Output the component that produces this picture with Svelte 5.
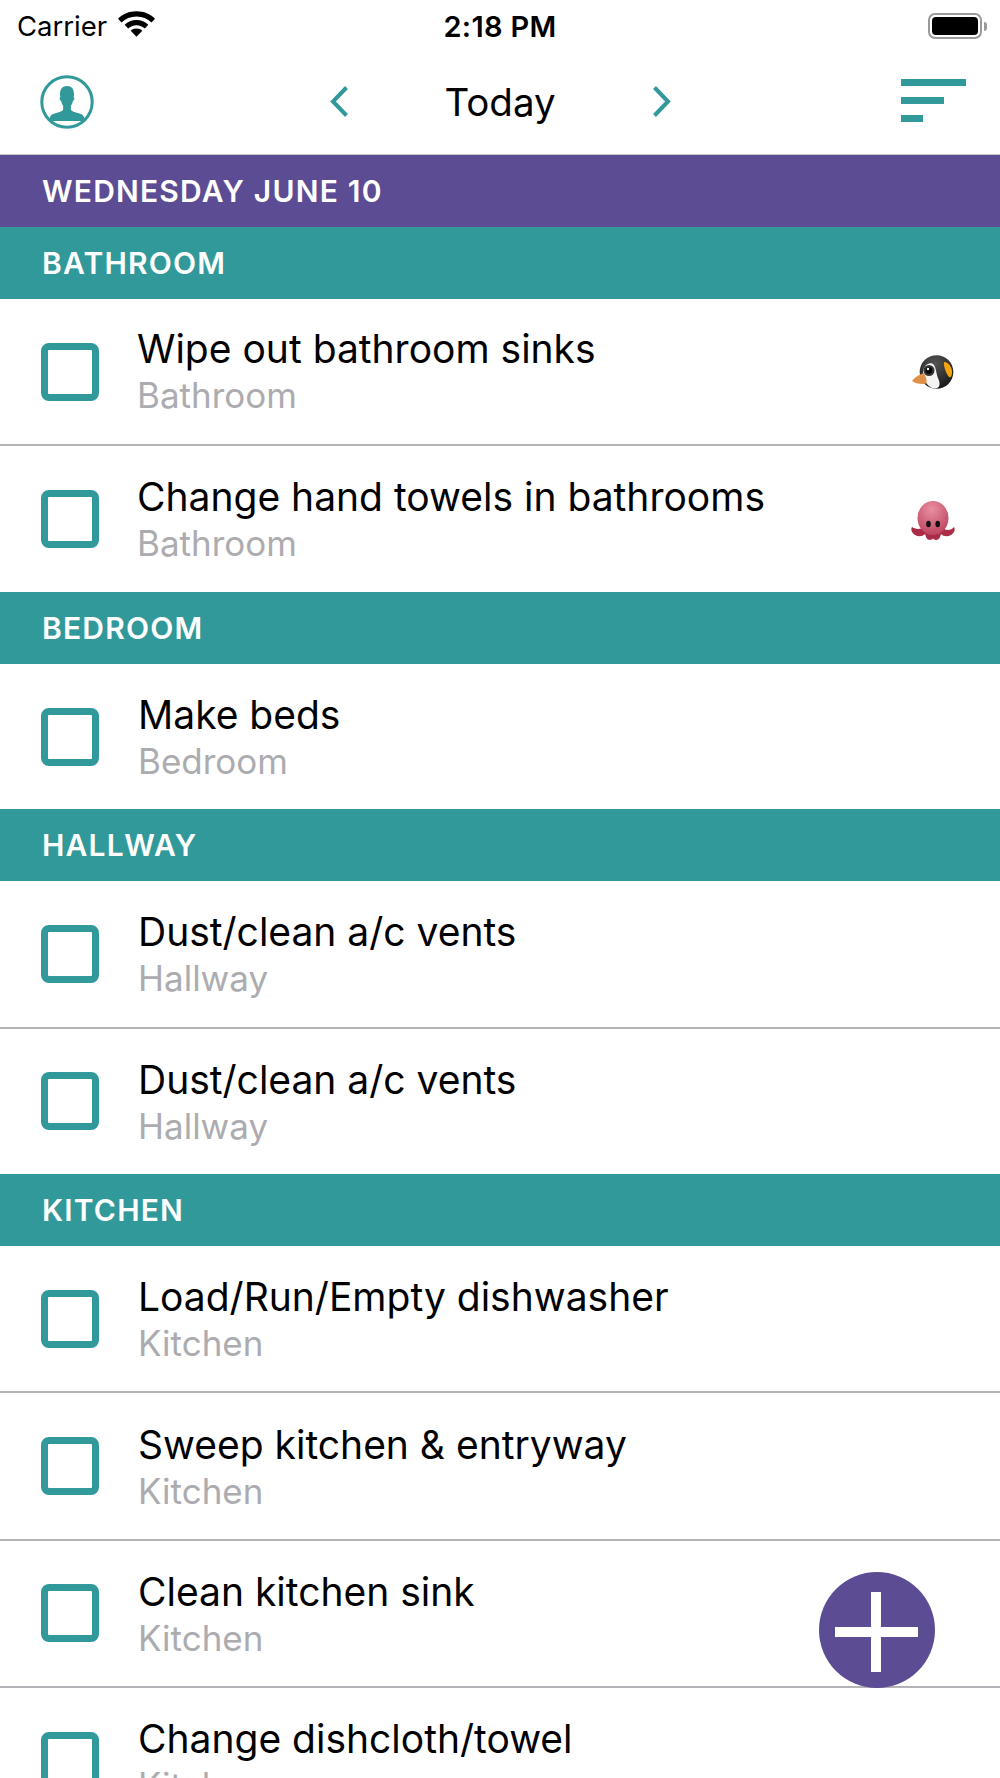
<script>
  const sections = [
    { name: 'BATHROOM', rows: [
      { t: 'Wipe out bathroom sinks', s: 'Bathroom', e: 'penguin', x: true },
      { t: 'Change hand towels in bathrooms', s: 'Bathroom', e: 'octopus', x: true }
    ]},
    { name: 'BEDROOM', rows: [{ t: 'Make beds', s: 'Bedroom' }]},
    { name: 'HALLWAY', rows: [
      { t: 'Dust/clean a/c vents', s: 'Hallway' },
      { t: 'Dust/clean a/c vents', s: 'Hallway' }
    ]},
    { name: 'KITCHEN', rows: [
      { t: 'Load/Run/Empty dishwasher', s: 'Kitchen' },
      { t: 'Sweep kitchen & entryway', s: 'Kitchen' },
      { t: 'Clean kitchen sink', s: 'Kitchen' },
      { t: 'Change dishcloth/towel', s: 'Kitchen' }
    ]}
  ];
</script>

<div class="screen">
  <div class="status">
    <div class="left">
      <span class="carrier">Carrier</span>
      <svg class="wifi" viewBox="1.500 4 35 24" width="37" height="26">
        <path d="M19 4C12 4 6 6.600 1.500 11l3.300 3.500C8.500 11 13.500 8.900 19 8.900s10.500 2.100 14.200 5.600l3.300-3.500C32 6.600 26 4 19 4z"/>
        <path d="M19 12.300c-4.400 0-8.300 1.700-11.200 4.400l3.300 3.500c2.100-1.900 4.900-3.100 7.900-3.100s5.800 1.200 7.900 3.100l3.300-3.500c-2.900-2.700-6.800-4.400-11.200-4.400z"/>
        <path d="M19 20.300c-2.200 0-4.100.8-5.500 2.200L19 28l5.500-5.500c-1.400-1.400-3.300-2.200-5.500-2.200z"/>
      </svg>
    </div>
    <span class="time">2:18 PM</span>
    <div class="battery"><div class="shell"><div class="fill"></div></div><div class="nub"></div></div>
  </div>

  <header class="nav">
    <svg class="avatar" viewBox="0 0 54 54" width="54" height="54">
      <defs><clipPath id="c"><circle cx="27" cy="27" r="25"/></clipPath></defs>
      <circle cx="27" cy="27" r="25.200" fill="none" stroke="#31999a" stroke-width="3"/>
      <g clip-path="url(#c)" fill="#31999a">
        <path d="M27 11c-4.800 0-7 3.300-7 8.300 0 1 .1 2 .3 3-.7.200-.8 1-.5 2 .3.900.7 1.500 1.300 1.600.4 2 1.100 3.600 2 4.800v3.800c-.2 1.600-3.400 2.600-7.200 3.600-2.800.8-4.700 1.800-5.500 3.100-.6 1-.9 2.700-1 4.800h35.200c-.1-2.100-.4-3.800-1-4.800-.8-1.300-2.700-2.300-5.500-3.100-3.800-1-7-2-7.200-3.600v-3.800c.9-1.200 1.600-2.800 2-4.800.6-.1 1-.7 1.300-1.600.3-1 .2-1.800-.5-2 .2-1 .3-2 .3-3 0-5-2.200-8.300-7-8.300z"/>
      </g>
    </svg>
    <div class="center">
      <svg class="chev" viewBox="0 0 18 31" width="18" height="31"><path d="M16.500 1.500 3 15.500l13.500 14" fill="none" stroke="#31999a" stroke-width="4"/></svg>
      <span class="title">Today</span>
      <svg class="chev" viewBox="0 0 18 31" width="18" height="31"><path d="M1.500 1.500 15 15.500 1.500 29.500" fill="none" stroke="#31999a" stroke-width="4"/></svg>
    </div>
    <div class="sort"><i class="b1"></i><i class="b2"></i><i class="b3"></i></div>
  </header>

  <div class="date">WEDNESDAY JUNE 10</div>

  {#each sections as sec}
    <div class="sec">{sec.name}</div>
    {#each sec.rows as r, i}
      <div class="row" class:last={i === sec.rows.length - 1}>
        <div class="check"></div>
        <div class="text" class:shift={r.x}>
          <div class="t">{r.t}</div>
          <div class="s">{r.s}</div>
        </div>
        {#if r.e === 'penguin'}
          <svg class="emoji peng" viewBox="0 0 44 36" width="44" height="36">
            <defs>
              <radialGradient id="pb" cx="0.45" cy="0.25" r="0.8"><stop offset="0" stop-color="#555"/><stop offset="1" stop-color="#141414"/></radialGradient>
            </defs>
            <circle cx="24.500" cy="17" r="16.800" fill="url(#pb)"/>
            <path d="M16 9c-3 1-5 5-5 9 0 6 3 12 9 15 4 1.500 7 0 7.500-3 .5-4-1.500-6-2.500-10-1-3-1-7-3-10-1.500-2-4-2-6-1z" fill="#f4f4f4"/>
            <path d="M32 7c3-.5 7.500 3.500 8 9 .2 3-.5 6-2 6.500-3-1-7-12-6-15.500z" fill="#f5a30f"/>
            <path d="M0 26c2-3 7-6.500 11.500-8 2 2.500 3.500 6 3 10.500C10 29.500 4 29 0 26z" fill="#e08f48"/>
            <circle cx="17" cy="15.500" r="5.500" fill="#333"/>
            <circle cx="17" cy="15.500" r="3.300" fill="#000"/>
            <circle cx="16" cy="14" r="1.200" fill="#fff"/>
          </svg>
        {:else if r.e === 'octopus'}
          <svg class="emoji oct" viewBox="0 0 44 40" width="44" height="40">
            <defs>
              <radialGradient id="ob" cx="0.45" cy="0.25" r="0.85"><stop offset="0" stop-color="#e98fa3"/><stop offset="1" stop-color="#b83a57"/></radialGradient>
            </defs>
            <path d="M1 26c-1.500 2-.5 6 3 8 3.500 2 7.500 1.500 10-1l1 3c1 3 5 4 7 1.500 2 2.500 6 1.500 7-1.500l1-3c2.500 2.500 6.500 3 10 1 3.500-2 4.500-6 3-8-2 2.500-5.500 3.500-9 2.500L32 24H12l-2 3.500c-3.500 1-7 0-9-1.500z" fill="#ab2c46"/>
            <ellipse cx="22" cy="17" rx="15.500" ry="17" fill="url(#ob)"/>
            <ellipse cx="17.500" cy="23" rx="2.300" ry="3.200" fill="#111"/>
            <ellipse cx="26.700" cy="23" rx="2.300" ry="3.200" fill="#111"/>
          </svg>
        {/if}
      </div>
    {/each}
  {/each}

  <div class="fab"><i class="h"></i><i class="v"></i></div>
</div>

<style>
  :global(body) { margin: 0; background: #fff; }
  .screen {
    position: relative;
    width: 1000px;
    height: 1778px;
    overflow: hidden;
    background: #fff;
    font-family: Inter, "Liberation Sans", sans-serif;
    color: #000;
  }
  .status {
    height: 52px;
    display: grid;
    grid-template-columns: 1fr auto 1fr;
    align-items: center;
    padding: 0 13px 0 17px;
  }
  .left { display: flex; align-items: center; gap: 11px; }
  .carrier { font-size: 27.500px; }
  .wifi { margin-top: -4px; }
  .time { font-size: 29px; font-weight: 600; letter-spacing: .3px; margin-left: -4px; }
  .battery { justify-self: end; display: flex; align-items: center; }
  .shell { width: 54px; height: 26px; box-sizing: border-box; border: 2px solid #9a9a9a; border-radius: 7px; padding: 2px; }
  .fill { width: 100%; height: 100%; background: #000; border-radius: 4px; }
  .nub { width: 3px; height: 9px; background: #9a9a9a; border-radius: 0 3px 3px 0; margin-left: 2px; }

  .nav {
    height: 103px;
    box-sizing: border-box;
    border-bottom: 1px solid #c8c8c8;
    display: grid;
    grid-template-columns: 1fr auto 1fr;
    align-items: center;
    padding: 0 34px;
  }
  .avatar { margin-left: 6px; margin-top: -2px; }
  .center { display: flex; align-items: center; gap: 97px; margin-left: 1px; }
  .chev { margin-top: -3px; }
  .title { font-size: 38.500px; width: 112px; text-align: center; margin-top: -3px; margin-left: -1px; }
  .sort { justify-self: end; display: flex; flex-direction: column; gap: 10.500px; width: 65px; margin-top: -5px; }
  .sort i { display: block; height: 7.500px; background: #31999a; }
  .b1 { width: 65px; }
  .b2 { width: 43px; }
  .b3 { width: 22px; }

  .date, .sec {
    height: 72px;
    box-sizing: border-box;
    display: flex;
    align-items: center;
    padding-left: 42px;
    color: #fff;
    font-size: 30px;
    font-weight: 600;
    letter-spacing: 1.200px;
  }
  .date { background: #5c4c94; }
  .sec { background: #31999a; }

  .row {
    height: 147.300px;
    box-sizing: border-box;
    border-bottom: 2px solid #b4b4b8;
    display: flex;
    align-items: center;
    padding-left: 41px;
    padding-right: 46px;
  }
  .row.last { border-bottom: 0; height: 145.500px; }
  .check {
    width: 58px;
    height: 58px;
    box-sizing: border-box;
    border: 7px solid #31999a;
    border-radius: 8px;
    flex: none;
  }
  .text { margin-left: 39px; flex: 1; margin-top: 3px; }
  .text.shift { margin-left: 38px; margin-top: 1px; }
  .t { font-size: 39px; line-height: 46px; }
  .s { font-size: 35px; line-height: 46px; color: #acacb0; }
  .emoji { flex: none; margin-top: 2px; }
  .emoji.peng { margin-right: -2px; }
  .emoji.oct { margin-right: -1px; margin-top: 4px; }

  .fab {
    position: absolute;
    left: 819px;
    top: 1572px;
    width: 116px;
    height: 116px;
    border-radius: 50%;
    background: #5c4c94;
  }
  .fab i { position: absolute; background: #fff; }
  .fab .h { left: 16px; top: 55px; width: 83px; height: 10px; }
  .fab .v { left: 52px; top: 20px; width: 10px; height: 80px; }
</style>
